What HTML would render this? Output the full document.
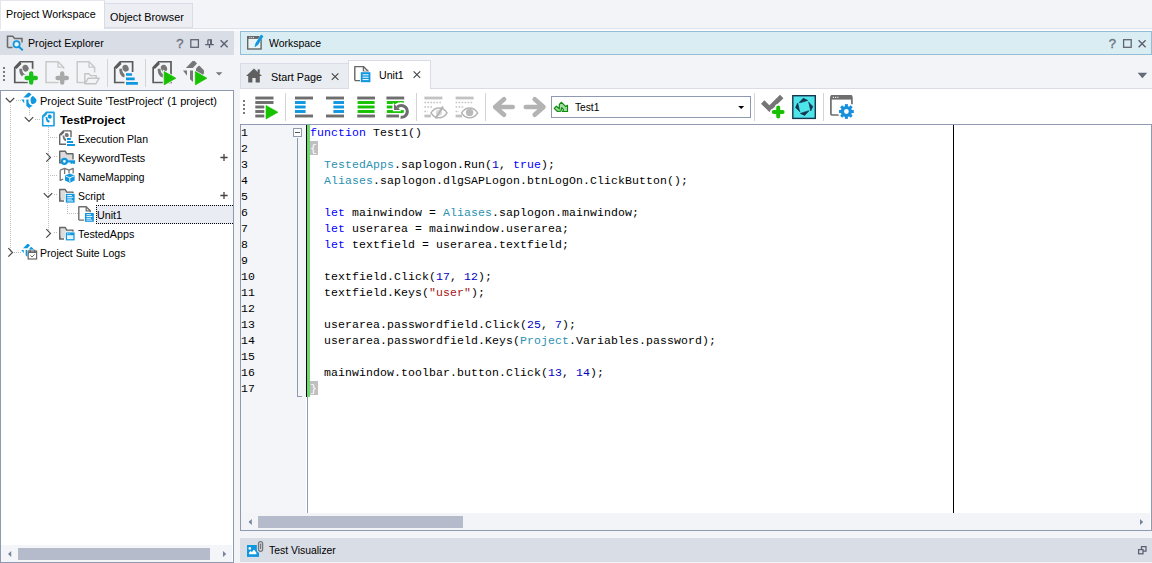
<!DOCTYPE html>
<html>
<head>
<meta charset="utf-8">
<title>Project Workspace</title>
<style>
html,body{margin:0;padding:0;}
body{width:1152px;height:563px;overflow:hidden;background:#f3f4f7;position:relative;font-family:"Liberation Sans",sans-serif;font-size:12px;color:#111;}
.a{position:absolute;box-sizing:border-box;}
.t{position:absolute;white-space:nowrap;font-size:11.500px;line-height:16px;height:16px;transform-origin:0 50%;color:#000;}
.b{font-weight:bold;}
svg{position:absolute;overflow:visible;}
.c{position:absolute;left:310px;white-space:pre;font-family:"Liberation Mono",monospace;font-size:11.5px;letter-spacing:0.1px;line-height:16px;height:16px;color:#000;}
.ln{position:absolute;left:241px;white-space:pre;font-family:"Liberation Mono",monospace;font-size:11.5px;letter-spacing:0.1px;line-height:16px;height:16px;color:#000;}
.k{color:#0000ff}.o{color:#2b91af}.n{color:#0000c0}.s{color:#a31515}
.dv{position:absolute;width:1px;background-image:linear-gradient(to bottom,#bdbdbd 50%,transparent 50%);background-size:1px 2px;}
.dh{position:absolute;height:1px;background-image:linear-gradient(to right,#bdbdbd 50%,transparent 50%);background-size:2px 1px;}
.sep{position:absolute;width:1px;background:#d4d4d4;}
.gd{position:absolute;width:2px;height:2px;background:#7a7a7a;}
</style>
</head>
<body>
<!-- top tabs -->
<div class="a" style="left:0;top:0;width:105px;height:29px;background:#fff;border-top:1px solid #e4e6ec;border-left:1px solid #e4e6ec;border-right:1px solid #d9dce6;"></div>
<div class="a" style="left:105px;top:3px;width:88px;height:25px;background:#eceef3;border:1px solid #d9dce6;border-left:none;"></div>
<div class="a" style="left:105px;top:28px;width:1047px;height:1px;background:#dfe2ea;"></div>
<div class="a" style="left:0;top:29px;width:1152px;height:2px;background:#fafbfc;"></div>
<!-- left panel -->
<div class="a" style="left:0;top:31px;width:234px;height:24px;background:#d8dde6;"></div>
<div class="a" style="left:0;top:90px;width:234px;height:473px;background:#fff;border:1px solid #8f9ab0;"></div>
<div class="a" style="left:1px;top:545px;width:231px;height:17px;background:#f4f5f8;"></div>
<div class="a" style="left:18px;top:548px;width:192px;height:12px;background:#b5bbca;"></div>
<!-- right panel -->
<div class="a" style="left:240px;top:31px;width:912px;height:24px;background:#d9edf2;border:1px solid #93bed6;"></div>
<div class="a" style="left:240px;top:88px;width:912px;height:1px;background:#d9dce6;"></div>
<div class="a" style="left:240px;top:63px;width:109px;height:25px;background:#e9ecf1;border-top:1px solid #d9dce6;border-left:1px solid #d9dce6;"></div>
<div class="a" style="left:348px;top:60px;width:83px;height:29px;background:#fff;border:1px solid #d9dce6;border-bottom:none;"></div>
<div class="a" style="left:240px;top:89px;width:912px;height:35px;background:#fff;"></div>
<div class="a" style="left:240px;top:124px;width:912px;height:407px;background:#fff;border:1px solid #8f9ab0;"></div>
<div class="a" style="left:241px;top:125px;width:65px;height:388px;background:#f3f5f9;"></div>
<div class="a" style="left:307px;top:125px;width:1px;height:388px;background:#8f9ab0;"></div>
<div class="a" style="left:306px;top:125px;width:1px;height:272px;background:#000;"></div>
<div class="a" style="left:307px;top:125px;width:3px;height:272px;background:#6cd86c;"></div>
<div class="a" style="left:953px;top:125px;width:1px;height:388px;background:#000;"></div>
<div class="a" style="left:241px;top:513px;width:909px;height:17px;background:#f3f4f7;"></div>
<div class="a" style="left:258px;top:516px;width:205px;height:12px;background:#b5bbca;"></div>
<div class="a" style="left:240px;top:538px;width:912px;height:24px;background:#d8dde6;"></div>
<!-- combo -->
<div class="a" style="left:551px;top:96px;width:200px;height:22px;background:#fff;border:1px solid #8f9ab0;"></div>
<!-- fold -->
<div class="a" style="left:297px;top:138px;width:1px;height:259px;background:#8f9ab0;"></div>
<div class="a" style="left:297px;top:396px;width:5px;height:1px;background:#8f9ab0;"></div>
<div class="a" style="left:293px;top:128px;width:9px;height:9px;background:#fff;border:1px solid #8f9ab0;"></div>
<div class="a" style="left:295px;top:132px;width:5px;height:1px;background:#555;"></div>
<!-- brace highlights -->
<div class="a" style="left:310px;top:141px;width:8px;height:14px;background:#c0c0c0;"></div>
<div class="a" style="left:310px;top:381px;width:8px;height:14px;background:#c0c0c0;"></div>
<!-- selected tree row -->
<div class="a" style="left:96px;top:205px;width:137px;height:19px;background:#e9ecf2;border:1px dotted #000;border-right:none;"></div>
<svg style="left:0;top:0" width="1152" height="563"><path d="M8 554l3.200-3v6z M226.200 554l-3.200-3v6z M248.600 522l3.200-3v6z M1143.200 522l-3.200-3v6z" fill="#76819a"/></svg>
<div class="t" id="L1" style="left:6.300px;transform:scaleX(0.931);top:6px;">Project Workspace</div>
<div class="t" id="L2" style="left:110.4px;transform:scaleX(0.939);top:9px;">Object Browser</div>
<div class="t" id="L3" style="left:28.200px;transform:scaleX(0.927);top:35px;">Project Explorer</div>
<div class="t" id="L4" style="left:268.7px;transform:scaleX(0.910);top:35px;">Workspace</div>
<div class="t" id="L5" style="left:271.400px;transform:scaleX(0.939);top:69px;">Start Page</div>
<div class="t" id="L6" style="left:379.3px;transform:scaleX(0.920);top:67px;">Unit1</div>
<div class="t" id="L7" style="left:575.0px;transform:scaleX(0.887);top:99px;">Test1</div>
<div class="t" id="L8" style="left:269.1px;transform:scaleX(0.904);top:542px;">Test Visualizer</div>
<div class="t" id="T1" style="left:40.2px;transform:scaleX(0.958);top:93px;">Project Suite 'TestProject' (1 project)</div>
<div class="t b" id="T2" style="left:60.4px;transform:scaleX(1.053);top:112px;">TestProject</div>
<div class="t" id="T3" style="left:78.3px;transform:scaleX(0.913);top:131px;">Execution Plan</div>
<div class="t" id="T4" style="left:78.3px;transform:scaleX(0.939);top:150px;">KeywordTests</div>
<div class="t" id="T5" style="left:78.100px;transform:scaleX(0.889);top:169px;">NameMapping</div>
<div class="t" id="T6" style="left:78.100px;transform:scaleX(0.904);top:188px;">Script</div>
<div class="t" id="T7" style="left:97px;transform:scaleX(0.932);top:207px;">Unit1</div>
<div class="t" id="T8" style="left:78.100px;transform:scaleX(0.938);top:226px;">TestedApps</div>
<div class="t" id="T9" style="left:40.2px;transform:scaleX(0.916);top:245px;">Project Suite Logs</div>
<div class="ln" style="top:125px">1</div>
<div class="c" style="top:125px"><span class="k">function</span> Test1()</div>
<div class="ln" style="top:141px">2</div>
<div class="c" style="top:141px"><span style="color:#fff">{</span></div>
<div class="ln" style="top:157px">3</div>
<div class="c" style="top:157px">  <span class="o">TestedApps</span>.saplogon.Run(<span class="n">1</span>, <span class="k">true</span>);</div>
<div class="ln" style="top:173px">4</div>
<div class="c" style="top:173px">  <span class="o">Aliases</span>.saplogon.dlgSAPLogon.btnLogOn.ClickButton();</div>
<div class="ln" style="top:189px">5</div>
<div class="ln" style="top:205px">6</div>
<div class="c" style="top:205px">  <span class="k">let</span> mainwindow = <span class="o">Aliases</span>.saplogon.mainwindow;</div>
<div class="ln" style="top:221px">7</div>
<div class="c" style="top:221px">  <span class="k">let</span> userarea = mainwindow.userarea;</div>
<div class="ln" style="top:237px">8</div>
<div class="c" style="top:237px">  <span class="k">let</span> textfield = userarea.textfield;</div>
<div class="ln" style="top:253px">9</div>
<div class="ln" style="top:269px">10</div>
<div class="c" style="top:269px">  textfield.Click(<span class="n">17</span>, <span class="n">12</span>);</div>
<div class="ln" style="top:285px">11</div>
<div class="c" style="top:285px">  textfield.Keys(<span class="s">"user"</span>);</div>
<div class="ln" style="top:301px">12</div>
<div class="ln" style="top:317px">13</div>
<div class="c" style="top:317px">  userarea.passwordfield.Click(<span class="n">25</span>, <span class="n">7</span>);</div>
<div class="ln" style="top:333px">14</div>
<div class="c" style="top:333px">  userarea.passwordfield.Keys(<span class="o">Project</span>.Variables.password);</div>
<div class="ln" style="top:349px">15</div>
<div class="ln" style="top:365px">16</div>
<div class="c" style="top:365px">  mainwindow.toolbar.button.Click(<span class="n">13</span>, <span class="n">14</span>);</div>
<div class="ln" style="top:381px">17</div>
<div class="c" style="top:381px"><span style="color:#fff">}</span></div>
<svg style="left:0;top:0" width="1152" height="563">
<path d="M7.5 47.5V36.2h5.2l2 2.3h7.3v4" fill="none" stroke="#6a6a6a" stroke-width="1.5"/>
<path d="M7.5 47.5h5" fill="none" stroke="#6a6a6a" stroke-width="1.5"/>
<circle cx="16.6" cy="44.3" r="3.1" fill="#e8f4fb" stroke="#1296dd" stroke-width="1.7"/>
<path d="M19 46.8l3.2 3" stroke="#1296dd" stroke-width="2" stroke-linecap="round"/>
<rect x="190.8" y="39.7" width="7.6" height="7.6" fill="none" stroke="#5b6070" stroke-width="1.250"/>
<path d="M207.8 39.900h3.800M207.900 39.800v4.600M205.200 44.600h8.600M209.500 44.600v3.400" fill="none" stroke="#5b6070" stroke-width="1.250"/><path d="M211 39.400v5" stroke="#5b6070" stroke-width="1.900"/>
<path d="M220.6 40.2l7 7M227.6 40.2l-7 7" stroke="#5b6070" stroke-width="1.400"/>
<rect x="1123.6" y="39.7" width="7.6" height="7.6" fill="none" stroke="#5b6070" stroke-width="1.250"/>
<path d="M1138.6 40.2l7 7M1145.6 40.2l-7 7" stroke="#5b6070" stroke-width="1.400"/>
<path d="M1137.6 72.8h9.6l-4.8 5.4z" fill="#666b7a"/>
<path d="M331.8 73.3l6.6 6.6M338.4 73.3l-6.6 6.6" stroke="#444" stroke-width="1.1"/>
<path d="M413.6 71.3l6.6 6.6M420.2 71.3l-6.6 6.6" stroke="#444" stroke-width="1.1"/>
<path d="M1141.5 549.5v-3h4.5v4.5h-3" fill="none" stroke="#5b6070" stroke-width="1.250"/><rect x="1138.6" y="549.6" width="4.4" height="4.2" fill="none" stroke="#5b6070" stroke-width="1.250"/>
<rect x="3" y="67" width="2" height="2" fill="#7a7a7a"/>
<rect x="3" y="71" width="2" height="2" fill="#7a7a7a"/>
<rect x="3" y="75" width="2" height="2" fill="#7a7a7a"/>
<rect x="3" y="79" width="2" height="2" fill="#7a7a7a"/>
<path d="M14.75 67.6L20.2 61.75H32.6V82.5H14.75Z" fill="none" stroke="#5a5a5a" stroke-width="1.7"/><path d="M14.75 67.6L20.2 61.75L21.5 64L16.5 69Z" fill="#5a5a5a"/><ellipse cx="25.6" cy="68.2" rx="3" ry="3.5" transform="rotate(-25 25.6 68.2)" fill="#777"/><path d="M19.3 68.8h2.8c0 3.4 1.3 5.2 4 6l-1.8 2.8c-3.4-1-5-4-5-8.8z" fill="#777"/>
<circle cx="31.2" cy="78" r="8" fill="#f3f4f7" opacity="0"/>
<path d="M22.5 71h17v14h-17z" fill="#f3f4f7" opacity="0"/>
<path d="M25.2 78H37.2M31.2 72V84" stroke="#f3f4f7" stroke-width="7" stroke-linecap="round" fill="none"/>
<path d="M26.6 78H35.8M31.2 73.4V82.6" stroke="#1cc21c" stroke-width="4.4" stroke-linecap="round" fill="none"/>
<path d="M46 61.75H58L63.6 67.2V82.5H46Z" fill="none" stroke="#c9c9c9" stroke-width="1.5"/><path d="M58 61.75V67.2H63.6" fill="none" stroke="#c9c9c9" stroke-width="1.3"/>
<path d="M56.2 78H68.2M62.2 72V84" stroke="#f3f4f7" stroke-width="7" stroke-linecap="round" fill="none"/>
<path d="M57.6 78H66.8M62.2 73.4V82.6" stroke="#a9a9a9" stroke-width="4.4" stroke-linecap="round" fill="none"/>
<path d="M84 82.5H77.2V61.75H89L94.6 67.2V72.5" fill="none" stroke="#c9c9c9" stroke-width="1.5"/><path d="M89 61.75V67.2H94.6" fill="none" stroke="#c9c9c9" stroke-width="1.3"/>
<path d="M84.8 83.8V73.8h4.2l1.6 1.8h5.6v2.6M84.8 83.8l3.4-5.6h11l-3.4 5.6z" fill="#f3f4f7" stroke="#c4c4c4" stroke-width="1.4" stroke-linejoin="round"/>
<rect x="107" y="59" width="1" height="28" fill="#d4d4d4"/>
<path d="M114.75 67.6L120.2 61.75H132.6V82.5H114.75Z" fill="none" stroke="#5a5a5a" stroke-width="1.7"/><path d="M114.75 67.6L120.2 61.75L121.5 64L116.5 69Z" fill="#5a5a5a"/><ellipse cx="125.6" cy="68.2" rx="3" ry="3.5" transform="rotate(-25 125.6 68.2)" fill="#777"/><path d="M119.3 68.8h2.8c0 3.4 1.3 5.2 4 6l-1.8 2.8c-3.4-1-5-4-5-8.8z" fill="#777"/>
<rect x="124.5" y="72" width="14.5" height="14" fill="#f3f4f7"/>
<path d="M126 74.5h6M126 78.9h8.7M126 83.4h11.9" stroke="#0f97e0" stroke-width="2.7"/>
<rect x="145" y="59" width="1" height="28" fill="#d4d4d4"/>
<path d="M153.15 67.6L158.6 61.75H171.0V82.5H153.15Z" fill="none" stroke="#5a5a5a" stroke-width="1.7"/><path d="M153.15 67.6L158.6 61.75L159.9 64L154.9 69Z" fill="#5a5a5a"/><ellipse cx="164.0" cy="68.2" rx="3" ry="3.5" transform="rotate(-25 164.0 68.2)" fill="#777"/><path d="M157.70000000000002 68.8h2.8c0 3.4 1.3 5.2 4 6l-1.8 2.8c-3.4-1-5-4-5-8.8z" fill="#777"/>
<path d="M162.800 69.400L178.400 78.200 162.800 87Z" fill="#f3f4f7"/>
<path d="M164.2 71.6L175.8 78.19999999999999L164.2 84.8Z" fill="#16c200" stroke="#16c200" stroke-width="0.8" stroke-linejoin="round"/>
<path d="M185.85 67.90L192.50 61.10L194.60 61.10L197.00 63.50L192.80 67.90Z" fill="#777"/><path d="M183.00 70.50L187.00 70.50L187.00 75.80Z" fill="#777"/><path d="M190.00 70.50L193.00 70.50L193.00 82.00L190.00 79.20Z" fill="#777"/><path d="M196.20 68.20L198.20 66.30C198.80 65.70 199.40 65.70 200.00 66.30L203.60 70.00C204.20 70.80 204.20 72.00 203.80 73.40C202.60 76.40 199.80 77.60 197.20 76.40C195.80 73.60 195.60 70.80 196.20 68.20Z" fill="#777"/>
<path d="M193.800 69.400L209.400 78.200 193.800 87Z" fill="#f3f4f7"/>
<path d="M195.4 71.6L206.8 78.19999999999999L195.4 84.8Z" fill="#16c200" stroke="#16c200" stroke-width="0.8" stroke-linejoin="round"/>
<path d="M215.8 72.2h6.6l-3.3 3.2z" fill="#777"/>
</svg>
<div class="t" style="left:176.200px;top:36px;color:#6f7280;font-size:13px;-webkit-text-stroke:0.350px #6f7280;">?</div>
<div class="t" style="left:1108.800px;top:36px;color:#6f7280;font-size:13px;-webkit-text-stroke:0.350px #6f7280;">?</div>
<div class="dv" style="left:10px;top:105px;height:148px"></div>
<div class="dh" style="left:16px;top:100px;width:5px"></div>
<div class="dh" style="left:14px;top:252px;width:7px"></div>
<div class="dv" style="left:29px;top:108px;height:8px"></div>
<div class="dh" style="left:35px;top:119px;width:6px"></div>
<div class="dv" style="left:48px;top:127px;height:106px"></div>
<div class="dh" style="left:50px;top:137px;width:8px"></div>
<div class="dh" style="left:54px;top:156px;width:4px"></div>
<div class="dh" style="left:50px;top:175px;width:8px"></div>
<div class="dh" style="left:54px;top:194px;width:4px"></div>
<div class="dh" style="left:54px;top:232px;width:4px"></div>
<div class="dv" style="left:67px;top:203px;height:11px"></div>
<div class="dh" style="left:67px;top:213px;width:11px"></div>
<svg style="left:0;top:0" width="1152" height="563">
<path d="M5.8 98l4.2 4.2 4.2-4.2" fill="none" stroke="#484848" stroke-width="1.200"/>
<path d="M24.8 117.2l4.2 4.2 4.2-4.2" fill="none" stroke="#484848" stroke-width="1.200"/>
<path d="M43.8 193.2l4.2 4.2 4.2-4.2" fill="none" stroke="#484848" stroke-width="1.200"/>
<path d="M46.3 153.2l4.2 4.2-4.2 4.2" fill="none" stroke="#484848" stroke-width="1.200"/>
<path d="M46.3 229.2l4.2 4.2-4.2 4.2" fill="none" stroke="#484848" stroke-width="1.200"/>
<path d="M8.3 248.2l4.2 4.2-4.2 4.2" fill="none" stroke="#484848" stroke-width="1.200"/>
<path d="M23.35 97.57L28.14 92.67L29.65 92.67L31.38 94.40L28.36 97.57Z" fill="#0f97e0"/><path d="M21.30 99.44L24.18 99.44L24.18 103.26Z" fill="#0f97e0"/><path d="M26.34 99.44L28.50 99.44L28.50 102.32C28.93 104.26 30.37 105.42 32.82 105.42L29.65 107.72L28.50 107.72L26.34 105.70Z" fill="#0f97e0"/><path d="M30.80 97.78L32.24 96.42C32.68 95.98 33.11 95.98 33.54 96.42L36.13 99.08C36.56 99.66 36.56 100.52 36.28 101.53C35.41 103.69 33.40 104.55 31.52 103.69C30.52 101.67 30.37 99.66 30.80 97.78Z" fill="#0f97e0"/>
<path d="M42.7 116.3L46.4 112.4H54V125.7H42.7Z" fill="none" stroke="#1a9fe3" stroke-width="1.6" stroke-linejoin="round"/><path d="M42.7 116.3L46.4 112.4L47.4 113.9L44 117.3Z" fill="#1a9fe3"/><ellipse cx="49.8" cy="116.60000000000001" rx="1.9" ry="2.2" transform="rotate(-25 49.8 116.60000000000001)" fill="#0f97e0"/><path d="M45.6 117.10000000000001h1.8c0 2.2 .8 3.3 2.5 3.8l-1.1 1.8c-2.2-.6-3.2-2.6-3.2-5.6z" fill="#0f97e0"/>
<path d="M59.7 134.79999999999998L63.4 130.89999999999998H71V144.2H59.7Z" fill="none" stroke="#666" stroke-width="1.4" stroke-linejoin="round"/><path d="M59.7 134.79999999999998L63.4 130.89999999999998L64.4 132.39999999999998L61 135.79999999999998Z" fill="#666"/><ellipse cx="66.8" cy="135.1" rx="1.9" ry="2.2" transform="rotate(-25 66.8 135.1)" fill="#777"/><path d="M62.6 135.6h1.8c0 2.2 .8 3.3 2.5 3.8l-1.1 1.8c-2.2-.6-3.2-2.6-3.2-5.6z" fill="#777"/>
<rect x="66" y="137.2" width="10" height="9.6" fill="#fff"/>
<path d="M67 139h3.9M67 142h6M67 145h8" stroke="#0f97e0" stroke-width="1.8"/>
<path d="M59.7 162.5V151.2h5.6l1.4 2.6h6.3V159.5" fill="#dcdcdc" stroke="#666" stroke-width="1.4" stroke-linejoin="round"/><path d="M59.7 159.5V162.7H64" fill="none" stroke="#666" stroke-width="1.4"/>
<rect x="60.5" y="157.5" width="15" height="7" fill="#fff" opacity="0"/>
<circle cx="64.4" cy="161.3" r="2.5" fill="#fff" stroke="#0f97e0" stroke-width="2.2"/><path d="M67 161.3h8M71.6 161.3v2.4M74 161.3v2.4" stroke="#0f97e0" stroke-width="2.2" fill="none"/>
<path d="M60.2 170.2l4.4-1.8 4.4 1.8 4.2-1.8v5M60.2 170.2v10.2l3-1.2M64.6 168.6v5.5M69 170.2v3" fill="none" stroke="#777" stroke-width="1.3" stroke-linejoin="round"/>
<path d="M69.8 173.6l4.8 2v5l-4.8 2.2-4.8-2.2v-5z" fill="#0f97e0"/><path d="M65.6 176l4.2 1.8 4.2-1.8M69.8 177.8v4.4" stroke="#fff" stroke-width="0.9" fill="none"/>
<path d="M59.7 200.8V189.5h5.6l1.4 2.6h6.3V197.8" fill="#dcdcdc" stroke="#666" stroke-width="1.4" stroke-linejoin="round"/><path d="M59.7 197.8V201.0H64" fill="none" stroke="#666" stroke-width="1.4"/>
<rect x="65.0" y="193.0" width="10.4" height="10.400" fill="#fff"/><rect x="65.8" y="193.8" width="8.8" height="8.800" fill="#0f97e0"/><path d="M67.2 195.5h4.600M67.2 197.3h6M67.2 199.10000000000002h4.600M67.2 200.9h6" stroke="#fff" stroke-width="0.900"/>
<path d="M78.800 220.100V206.800h7.400l4 4v2.400" fill="none" stroke="#6e6e6e" stroke-width="1.400" stroke-linejoin="round"/><path d="M78.800 220.100h5.800M86.200 206.800v4h4" fill="none" stroke="#6e6e6e" stroke-width="1.300"/>
<rect x="84.2" y="212.2" width="10.4" height="10.400" fill="#fff"/><rect x="85" y="213" width="8.8" height="8.800" fill="#0f97e0"/><path d="M86.4 214.7h4.600M86.4 216.5h6M86.4 218.3h4.600M86.4 220.1h6" stroke="#fff" stroke-width="0.900"/>
<path d="M59.7 238.8V227.5h5.6l1.4 2.6h6.3V235.8" fill="#dcdcdc" stroke="#666" stroke-width="1.4" stroke-linejoin="round"/><path d="M59.7 235.8V239.0H64" fill="none" stroke="#666" stroke-width="1.4"/>
<rect x="65" y="231.6" width="10.4" height="9.6" fill="#fff"/><rect x="65.8" y="232.4" width="8.8" height="8" fill="#0f97e0"/><rect x="67" y="235.2" width="6.4" height="4" fill="#e6f4fc"/><path d="M67 233.8h3.4" stroke="#fff" stroke-width="0.9" stroke-dasharray="0.9 0.7"/>
<path d="M23.07 248.28L27.19 244.06L28.49 244.06L29.98 245.55L27.38 248.28Z" fill="#0f97e0"/><path d="M21.30 249.89L23.78 249.89L23.78 253.18Z" fill="#0f97e0"/><path d="M25.64 249.89L27.50 249.89L27.50 252.37C27.87 254.04 29.11 255.04 31.22 255.04L28.49 257.02L27.50 257.02L25.64 255.28Z" fill="#0f97e0"/><path d="M29.48 248.46L30.72 247.29C31.10 246.91 31.47 246.91 31.84 247.29L34.07 249.58C34.44 250.08 34.44 250.82 34.20 251.69C33.45 253.55 31.72 254.29 30.10 253.55C29.24 251.81 29.11 250.08 29.48 248.46Z" fill="#0f97e0"/>
<rect x="27.4" y="249.6" width="10" height="10.2" fill="#fff"/><rect x="28.2" y="251" width="8.4" height="8" fill="#fff" stroke="#666" stroke-width="1.2"/><path d="M28.2 252.4h8.4M30.2 249.8v2M34.6 249.8v2" stroke="#666" stroke-width="1.4"/><path d="M30.4 255.4l1.6 1.6 2.6-2.6" fill="none" stroke="#666" stroke-width="1"/>
<path d="M220.4 157.5h7.2M224 153.9v7.2M220.4 195.5h7.2M224 191.9v7.2" stroke="#444" stroke-width="1.3"/>
</svg>
<svg style="left:0;top:0" width="1152" height="563">
<rect x="247.700" y="36.800" width="13.400" height="12.200" fill="#e9f5f8" stroke="#666" stroke-width="1.400"/><path d="M247.700 37.600h13.400" stroke="#666" stroke-width="2.600"/><path d="M249.400 37.600h4.600" stroke="#e8e8e8" stroke-width="1" stroke-dasharray="1 0.800"/>
<path d="M254.400 47.400l.8-3.800 5.600-9.200 2.700 1.700-5.600 9.200z" fill="#d9edf2"/>
<path d="M255 46.600l.8-3 5.300-8.600 1.900 1.200-5.300 8.600z" fill="#0f97e0" stroke="#0f97e0" stroke-width="0.800" stroke-linejoin="round"/>
<path d="M246 76l8-7.4 8 7.4h-2.2v6.6h-4.2v-4.6h-3.2v4.6h-4.2v-6.600z" fill="#5f5f5f"/><rect x="257.6" y="69.4" width="2.2" height="4" fill="#5f5f5f"/>
<path d="M354.8 80.6V66.6h8.6l5 4.8v2.4" fill="none" stroke="#666" stroke-width="1.4" stroke-linejoin="round"/><path d="M354.8 80.6h5.4M363.4 66.6v4.800h5" fill="none" stroke="#666" stroke-width="1.3"/>
<rect x="360" y="71.400" width="11.2" height="11.4" fill="#fff"/><rect x="360.8" y="72.2" width="9.600" height="10" fill="#0f97e0"/><path d="M362.600 74.800h6M362.600 77.2h6M362.600 79.600h6" stroke="#fff" stroke-width="1"/>
<rect x="243" y="100" width="2" height="2" fill="#7a7a7a"/>
<rect x="243" y="104" width="2" height="2" fill="#7a7a7a"/>
<rect x="243" y="108" width="2" height="2" fill="#7a7a7a"/>
<rect x="243" y="112" width="2" height="2" fill="#7a7a7a"/>
<rect x="255.3" y="96.55" width="18.19999999999999" height="2.9" fill="#6e6e6e"/>
<rect x="255.3" y="101.05" width="18.19999999999999" height="2.9" fill="#6e6e6e"/>
<rect x="255.3" y="105.55" width="9.0" height="2.9" fill="#6e6e6e"/>
<rect x="255.3" y="110.05" width="9.0" height="2.9" fill="#6e6e6e"/>
<rect x="255.3" y="114.55" width="9.0" height="2.9" fill="#6e6e6e"/>
<path d="M266 105.400L278 112.200 266 119Z" fill="#16c200" stroke="#16c200" stroke-width="0.600" stroke-linejoin="round"/>
<rect x="285" y="93" width="1" height="28" fill="#d4d4d4"/>
<rect x="295" y="96.55" width="18" height="2.9" fill="#6e6e6e"/>
<rect x="295" y="114.55" width="18" height="2.9" fill="#6e6e6e"/>
<rect x="295" y="101.05" width="10.600000000000023" height="2.9" fill="#0f97e0"/>
<rect x="295" y="105.55" width="10.600000000000023" height="2.9" fill="#0f97e0"/>
<rect x="295" y="110.05" width="10.600000000000023" height="2.9" fill="#0f97e0"/>
<rect x="326" y="96.55" width="18" height="2.9" fill="#6e6e6e"/>
<rect x="326" y="114.55" width="18" height="2.9" fill="#6e6e6e"/>
<rect x="333.4" y="101.05" width="10.600000000000023" height="2.9" fill="#0f97e0"/>
<rect x="333.4" y="105.55" width="10.600000000000023" height="2.9" fill="#0f97e0"/>
<rect x="333.4" y="110.05" width="10.600000000000023" height="2.9" fill="#0f97e0"/>
<rect x="357.2" y="96.55" width="17.80000000000001" height="2.9" fill="#6e6e6e"/>
<rect x="357.2" y="114.55" width="17.80000000000001" height="2.9" fill="#6e6e6e"/>
<rect x="357.6" y="101.05" width="17.0" height="2.9" fill="#16c200"/>
<rect x="357.6" y="105.55" width="17.0" height="2.9" fill="#16c200"/>
<rect x="357.6" y="110.05" width="17.0" height="2.9" fill="#16c200"/>
<rect x="386.4" y="96.55" width="17.80000000000001" height="2.9" fill="#6e6e6e"/>
<rect x="386.4" y="114.55" width="12.600000000000023" height="2.9" fill="#6e6e6e"/>
<rect x="386.8" y="101.05" width="17.0" height="2.9" fill="#16c200"/>
<rect x="386.8" y="105.55" width="5.699999999999989" height="2.9" fill="#16c200"/>
<rect x="386.8" y="110.05" width="17.0" height="2.9" fill="#16c200"/>
<path d="M396.600 106.500A6.200 6.200 0 1 1 400.600 117.400" fill="none" stroke="#fff" stroke-width="5.400"/>
<path d="M392.800 102.500v8.700h8.600z" fill="#fff"/>
<path d="M397.300 107.200A5.900 5.900 0 1 1 400.600 117.300" fill="none" stroke="#6e6e6e" stroke-width="3"/>
<path d="M394 103.800v6.200h6.200z" fill="#6e6e6e"/>
<rect x="416" y="93" width="1" height="28" fill="#d4d4d4"/>
<rect x="424.4" y="96.6" width="18.0" height="2.8" fill="#c2c2c2"/>
<path d="M424.4 102.5h18" stroke="#c2c2c2" stroke-width="1.600" stroke-dasharray="1.600 1.400"/>
<path d="M424.4 107h8" stroke="#c2c2c2" stroke-width="1.600" stroke-dasharray="1.600 1.400"/>
<path d="M424.4 111.5h3.400" stroke="#c2c2c2" stroke-width="1.600" stroke-dasharray="1.600 1.400"/>
<rect x="424.4" y="114.6" width="6.5" height="2.8" fill="#c2c2c2"/>
<rect x="455.6" y="96.6" width="18.0" height="2.8" fill="#c2c2c2"/>
<path d="M455.6 102.5h18" stroke="#c2c2c2" stroke-width="1.600" stroke-dasharray="1.600 1.400"/>
<path d="M455.6 107h8" stroke="#c2c2c2" stroke-width="1.600" stroke-dasharray="1.600 1.400"/>
<path d="M455.6 111.5h3.400" stroke="#c2c2c2" stroke-width="1.600" stroke-dasharray="1.600 1.400"/>
<rect x="455.6" y="114.6" width="6.5" height="2.8" fill="#c2c2c2"/>
<path d="M431 112.800c4-6.500 12-6.500 16 0c-4 6.500-12 6.500-16 0z" fill="#fff" stroke="#b4b4b4" stroke-width="1.500"/><circle cx="439" cy="112.600" r="3.200" fill="#dcdcdc"/><path d="M435.500 118.500l7.500-12" stroke="#b4b4b4" stroke-width="2"/>
<path d="M461.600 112.800c4-6.500 12-6.500 16 0c-4 6.500-12 6.500-16 0z" fill="#fff" stroke="#b4b4b4" stroke-width="1.500"/><circle cx="469.600" cy="112.400" r="3.700" fill="#b9b9b9"/>
<rect x="485" y="93" width="1" height="28" fill="#d4d4d4"/>
<path d="M512.700 107H496M504 99.200L495.200 107l8.800 7.800" fill="none" stroke="#b3b3b3" stroke-width="4.600" stroke-linecap="round" stroke-linejoin="round"/>
<path d="M525.800 107H542.500M534.700 99.200L543.500 107l-8.800 7.800" fill="none" stroke="#b3b3b3" stroke-width="4.600" stroke-linecap="round" stroke-linejoin="round"/>
<path d="M554.200 108.400L556.400 106.200 559.300 108.800V104.400L561.500 102.300 565.800 106.600 567.500 105.300V111.500H562.400L563.500 109.700 561.700 107.600 560.900 111.200 557.500 111.500Z" fill="#a5dba5" stroke="#0a8a0a" stroke-width="1.200" stroke-linejoin="round"/>
<path d="M738.200 106h6l-3 3z" fill="#000"/>
<rect x="754" y="93" width="1" height="28" fill="#d4d4d4"/>
<path d="M764.400 103.700l5 5L780 98.200" fill="none" stroke="#757575" stroke-width="4.800" stroke-linecap="square" stroke-linejoin="miter"/>
<path d="M773.400 112h9.600M778.200 107.200v9.600" stroke="#fff" stroke-width="6.400" stroke-linecap="round"/>
<path d="M773.800 112h8.800M778.200 107.400v9.200" stroke="#16c200" stroke-width="4" stroke-linecap="round"/>
<rect x="792.800" y="95.700" width="22.500" height="22.700" fill="#4de4ea" stroke="#17344f" stroke-width="1.400"/>
<path d="M799.200 102.500L803.300 98.300 807.700 100.400 800.600 102.600Z" fill="#17344f" stroke="#17344f" stroke-width="0.700" stroke-linejoin="round"/>
<path d="M808.500 102.200L812.800 106.400 810.700 110.900 809.200 104Z" fill="#17344f" stroke="#17344f" stroke-width="0.700" stroke-linejoin="round"/>
<path d="M808.900 110.800L804.700 115.400 800.400 113.400 807.400 111.200Z" fill="#17344f" stroke="#17344f" stroke-width="0.700" stroke-linejoin="round"/>
<path d="M799.900 111.700L795.600 107.600 797.700 103 799.200 109.800Z" fill="#17344f" stroke="#17344f" stroke-width="0.700" stroke-linejoin="round"/>
<rect x="823" y="93" width="1" height="28" fill="#d4d4d4"/>
<path d="M839 115H832.400a1.500 1.500 0 0 1-1.500-1.500V97.400a1.500 1.500 0 0 1 1.500-1.500h18a1.500 1.500 0 0 1 1.500 1.500v6.800" fill="none" stroke="#6e6e6e" stroke-width="1.700"/><path d="M831 97.400h20.800" stroke="#6e6e6e" stroke-width="4.400"/><path d="M832.800 97.400h5.600" stroke="#e8e8e8" stroke-width="1.200" stroke-dasharray="1.200 1"/>
<circle cx="846.4" cy="111.5" r="8.600" fill="#fff"/>
<path d="M849.40 111.50L853.80 111.50" stroke="#1790dd" stroke-width="3"/>
<path d="M848.52 113.62L851.63 116.73" stroke="#1790dd" stroke-width="3"/>
<path d="M846.40 114.50L846.40 118.90" stroke="#1790dd" stroke-width="3"/>
<path d="M844.28 113.62L841.17 116.73" stroke="#1790dd" stroke-width="3"/>
<path d="M843.40 111.50L839.00 111.50" stroke="#1790dd" stroke-width="3"/>
<path d="M844.28 109.38L841.17 106.27" stroke="#1790dd" stroke-width="3"/>
<path d="M846.40 108.50L846.40 104.10" stroke="#1790dd" stroke-width="3"/>
<path d="M848.52 109.38L851.63 106.27" stroke="#1790dd" stroke-width="3"/>
<circle cx="846.4" cy="111.5" r="4" fill="none" stroke="#1790dd" stroke-width="3.200"/>
<rect x="247" y="545" width="12" height="11.900" fill="#0f97e0"/><circle cx="249.800" cy="548.400" r="1.300" fill="#fff"/><path d="M249 554.200v-1.400l1.600-1.800 1.400 1 2-2.600 2.400 3.400v1.400z" fill="#fff"/>
<rect x="258.500" y="541.600" width="4.100" height="9.700" rx="2.050" fill="#d8dde6" stroke="#d8dde6" stroke-width="3.400"/>
<rect x="258.500" y="541.600" width="4.100" height="9.700" rx="2.050" fill="none" stroke="#777" stroke-width="1.300"/><path d="M260.550 544.200v4.300" stroke="#777" stroke-width="1.300" stroke-linecap="round"/>
</svg>
</body>
</html>
